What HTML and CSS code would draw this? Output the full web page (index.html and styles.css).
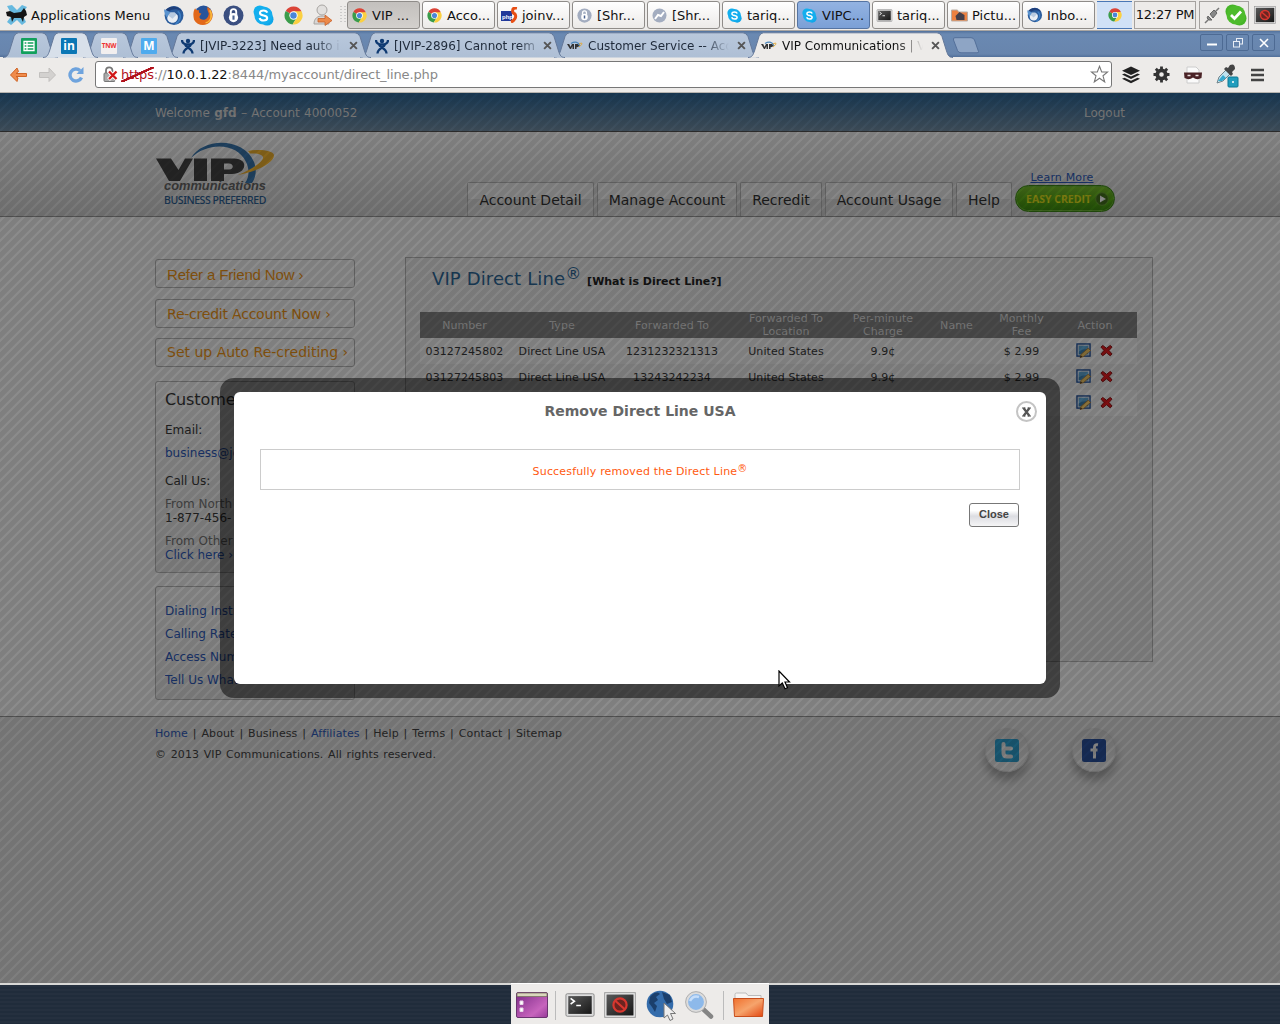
FILE: index.html
```html
<!DOCTYPE html>
<html lang="en">
<head>
<meta charset="utf-8">
<title>VIP Communications | VIP Direct Line</title>
<link rel="stylesheet" href="styles.css">
</head>
<body>
<svg class="defs" width="0" height="0">
  <defs>
    <linearGradient id="gTab" x1="0" y1="0" x2="0" y2="1"><stop offset="0" stop-color="#b9c8dc"/><stop offset="1" stop-color="#aebfd5"/></linearGradient>
    <linearGradient id="gPurple" x1="0" y1="0" x2="1" y2="1"><stop offset="0" stop-color="#7b2a86"/><stop offset=".7" stop-color="#c764bd"/><stop offset="1" stop-color="#963a98"/></linearGradient>
    <linearGradient id="gOrange" x1="0" y1="0" x2="1" y2="1"><stop offset="0" stop-color="#f0702d"/><stop offset=".5" stop-color="#f6a46c"/><stop offset="1" stop-color="#e2450f"/></linearGradient>
    <linearGradient id="gDark" x1="0" y1="0" x2="1" y2="1"><stop offset="0" stop-color="#5a5a5a"/><stop offset="1" stop-color="#161616"/></linearGradient>
  </defs>
  <symbol id="chrome" viewBox="0 0 20 20">
    <path d="M10 10 1.8 5.3A9.4 9.4 0 0 1 18.4 5.6Z" fill="#db4437"/><path d="M10 10 1.8 5.3A9.4 9.4 0 0 0 9 19.4L13.5 12Z" fill="#3b9c4a"/><path d="M10 10V5.6H18.4A9.4 9.4 0 0 1 9 19.4L13.7 12Z" fill="#fbd041"/>
    <circle cx="10" cy="10" r="4.4" fill="#fff"/><circle cx="10" cy="10" r="3.4" fill="#4a86d8"/>
  </symbol>
  <symbol id="skype" viewBox="0 0 20 20">
    <rect x="0.5" y="0.5" width="12" height="12" rx="6" fill="#10b0ee"/><rect x="7.500" y="7.500" width="12" height="12" rx="6" fill="#10a6e8"/><circle cx="10" cy="10" r="8.600" fill="#14aeee"/>
    <path d="M13.600 7.300C13 5.600 11.600 5.200 10 5.200 8 5.200 6.600 6 6.600 7.500 6.600 11 13.500 9 13.500 12.400 13.500 14 12 14.800 10 14.800 8 14.800 6.700 14 6.300 12.300" fill="none" stroke="#fff" stroke-width="2"/>
  </symbol>
  <symbol id="bird" viewBox="0 0 20 20">
    <circle cx="10.500" cy="10" r="9" fill="#2b5c9c"/><path d="M2 5C6 0 15 0 18 6 13 3 8 4 6 6Z" fill="#1e3f7b"/><path d="M4 12C4 7 12 6 14 10 15 14 12 17 9 17 6 17 4 15 4 12Z" fill="#e9eef4"/><path d="M1 4 7 7 4 12C2 10 1 7 1 4Z" fill="#5a93cf"/><path d="M5 10 9 13 13 9 11 7H7Z" fill="#b9cbe0"/><path d="M14 6C18 9 17 15 12 18" stroke="#3d7fc4" stroke-width="1.500" fill="none"/>
  </symbol>
  <symbol id="lock" viewBox="0 0 20 20">
    <circle cx="10" cy="10" r="9.500"/><path d="M7.400 9V6.500a2.600 2.600 0 0 1 5.200 0V9" fill="none" stroke="#fff" stroke-width="1.800"/><circle cx="10" cy="12" r="4.400" fill="#fff"/><path d="M10 10v4" stroke="#4b6390" stroke-width="2"/>
  </symbol>
  <symbol id="term" viewBox="0 0 32 26">
    <rect x="1" y="1" width="30" height="24" rx="1.500" fill="#ddd" stroke="#888"/><rect x="3.500" y="3.500" width="25" height="19" fill="url(#gDark)"/><path d="M6 6l4 3-4 3M12 13.500h5" fill="none" stroke="#fff" stroke-width="1.700"/>
  </symbol>
  <symbol id="block" viewBox="0 0 32 26">
    <rect x=".7" y=".7" width="30.600" height="24.600" fill="#eee" stroke="#999"/><rect x="2.500" y="2.500" width="27" height="21" fill="url(#gDark)"/><circle cx="16" cy="13" r="6.600" fill="#6b2420" stroke="#d8372f" stroke-width="2.200"/><path d="M11.500 9 20.500 17" stroke="#d8372f" stroke-width="2.200"/>
  </symbol>
  <symbol id="jira" viewBox="0 0 14 16">
    <circle cx="7" cy="3" r="2.200"/><path d="M1 2C1 6 4 6.500 7 6.500S13 6 13 2M2.500 15.500C2.500 10 9 10 10 6.500M11.500 15.500C11.500 10 5 10 4 6.500" fill="none" stroke="#0f3a72" stroke-width="2.300"/>
  </symbol>
  <symbol id="vipmini" viewBox="0 0 16 10">
    <path d="M0 3h2.200L3.500 6 5 3H7V8H5.500V5L4 8H3ZM8 3h2.600c2 0 2 3.200-.6 3.200H9.500V8H8Z" fill="#333"/><path d="M4 2.500C8 0 12 1 13 5" fill="none" stroke="#4c86ba" stroke-width="1.300"/><path d="M12 3C16 1 16 3 12 6" fill="none" stroke="#e5a935"/>
  </symbol>
  <symbol id="x" viewBox="0 0 8 8"><path d="M1 1 7 7M7 1 1 7" stroke="#555" stroke-width="1.700" fill="none"/></symbol>
  <symbol id="tab" viewBox="0 0 205 26"><path d="M0 25.500C4 25.500 5 23 6.500 19L11 4.500Q12.300 1 15.500.8H189Q192.500 1 194 4.500L198.500 19C200 23.500 201 25.500 205 25.500" stroke="#65799a"/></symbol>
  <symbol id="pin" viewBox="0 0 55 26"><path d="M0 25.500C4 25.500 5 23 6.500 19L11 4.500Q12.300 1 15.500.8H39Q42.500 1 44 4.500L48.500 19C50 23.500 51 25.500 55 25.500" stroke="#65799a"/></symbol>
  <symbol id="edit" viewBox="0 0 16 16">
    <rect x="1" y="1" width="14" height="13" fill="#dde8f5" stroke="#1d4f9c" stroke-width="1.400"/><rect x="3" y="3" width="10" height="9" fill="#62aedd"/><path d="M3 9Q7 6 13 7V12H3Z" fill="#3f86b8"/><path d="M4.500 15.500 5.500 12 13 5.500 15.500 8 8 14.500Z" fill="#fbd06a" stroke="#b07a2c" stroke-width=".8"/><path d="M4 15.800 5.200 13.200 6.600 14.700Z" fill="#432"/>
  </symbol>
  <symbol id="del" viewBox="0 0 14 14"><path d="M3 1.500 7 4.600 11 1.500 13 3.300 9.700 7 13 10.800 11 12.700 7 9.500 3 12.700 1 10.800 4.300 7 1 3.300Z" fill="#e81c20" stroke="#8d1010"/></symbol>
</svg>

<header class="panel">
  <div class="appmenu">
    <svg width="22" height="22" viewBox="0 0 22 22"><path d="M1 2 6 1 11 6 16 1 21 3 16 10 20 18 16 21 11 16 5 21 1 18 6 11Z" fill="#67b9df"/><path d="M0 8 4 7 8 9 15 8 18 4 20 7 21 11 18 13 17 18 15 14 8 14 6 18 5 13 1 12Z" fill="#141414"/></svg>
    <span>Applications Menu</span>
  </div>
  <div class="launchers">
    <svg width="21" height="21"><use href="#bird"/></svg>
    <svg width="21" height="21" viewBox="0 0 20 20"><circle cx="10" cy="9" r="8.500" fill="#27549b"/><path d="M2 3C3 5 4 5 6 5 5 7 6 8 8 8 7 10 5 11 7 13 11 16 15 12 15 8 14 5 13 4 14 2 19 5 20 11 17 15 13 21 4 20 1 14 0 10 0 6 2 3Z" fill="#e2681a"/><path d="M16 5C19 10 17 16 12 17" fill="none" stroke="#f9b83a" stroke-width="1.500"/></svg>
    <svg width="21" height="21" fill="#3b4f80"><use href="#lock"/></svg>
    <svg width="21" height="21"><use href="#skype"/></svg>
    <svg width="19" height="19"><use href="#chrome"/></svg>
    <svg width="20" height="22" viewBox="0 0 20 22"><circle cx="9" cy="6" r="5" fill="#e2e0de" stroke="#a8a5a2"/><path d="M1 20C1 14 5 12 9 12S15 14 16 20Z" fill="#d8d6d4" stroke="#a8a5a2"/><path d="M5 14.500h7V11l7 5.500-7 5V18H5Z" fill="#ec8a4a" stroke="#c8602a" stroke-width=".8"/></svg>
  </div>
  <svg class="grip" width="6" height="18"><path d="M1 0V18M5 0V18" stroke="#aaa" stroke-width="1" stroke-dasharray="1 2"/></svg>
  <nav class="tasks">
    <div class="task pressed"><svg width="15" height="15"><use href="#chrome"/></svg>VIP ...</div>
    <div class="task"><svg width="15" height="15"><use href="#chrome"/></svg>Acco...</div>
    <div class="task"><svg width="17" height="16" viewBox="0 0 17 16"><rect x="0" y="4" width="11" height="10" fill="#223a9a"/><text x="1" y="12" class="php">php</text><path d="M16 1C10 0 11 6 14 7 16 10 13 14 10 15" fill="none" stroke="#e84f14" stroke-width="3"/></svg>joinv...</div>
    <div class="task"><svg width="15" height="15" fill="#a3adc0"><use href="#lock"/></svg>[Shr...</div>
    <div class="task"><svg width="15" height="15" viewBox="0 0 15 15"><circle cx="7.500" cy="7.500" r="7" fill="#a3adc0"/><path d="M3 11 6 7l3 1 3-4" stroke="#fff" stroke-width="2" fill="none"/></svg>[Shr...</div>
    <div class="task"><svg width="15" height="15"><use href="#skype"/></svg>tariq...</div>
    <div class="task urgent"><svg width="15" height="15"><use href="#skype"/></svg>VIPC...</div>
    <div class="task"><svg width="15" height="13"><use href="#term"/></svg>tariq...</div>
    <div class="task"><svg width="16" height="14" viewBox="0 0 16 14"><path d="M0 2h6l1 2h9v9H0Z" fill="#ed8141" stroke="#b9aca3"/><path d="M4 8 8 4 13 7v5H5Z" fill="#443f4a"/></svg>Pictu...</div>
    <div class="task"><svg width="16" height="16"><use href="#bird"/></svg>Inbo...</div>
  </nav>
  <div class="active-win"><svg width="14" height="14"><use href="#chrome"/></svg></div>
  <div class="clock">12:27 PM</div>
  <div class="tray">
    <svg width="16" height="17" viewBox="0 0 16 17"><path d="M1 16 5 12M11 5 15 1" stroke="#777" stroke-width="1.500"/><path d="M4 9 8 13 5 13 3 11ZM6 7 10 3 13 6 9 11Z" fill="#888" stroke="#666"/></svg>
    <svg width="22" height="22" viewBox="0 0 22 22"><circle cx="7.500" cy="7.500" r="7" fill="#46b428"/><circle cx="14.500" cy="14.500" r="7" fill="#46b428"/><circle cx="11" cy="11" r="9.500" fill="#4dbb2c"/><path d="M6 11 9.500 14.500 16 7.500" fill="none" stroke="#fff" stroke-width="2.800"/></svg>
  </div>
  <svg class="screen" width="22" height="18"><use href="#block"/></svg>
</header>

<div class="tabstrip">
  <div class="tab pin p1"><svg class="shape" width="55" height="26" fill="url(#gTab)"><use href="#pin"/></svg>
    <svg width="16" height="16" viewBox="0 0 16 16"><rect width="16" height="16" rx="1" fill="#12a05c"/><path d="M3 3.500H13V12.500H3ZM3 6.500H13M3 9.500H13M6 3.500V12.500" fill="none" stroke="#fff" stroke-width="1.300"/></svg></div>
  <div class="tab pin p2"><svg class="shape" width="55" height="26" fill="#d8e0ea"><use href="#pin"/></svg><span class="fav linkedin">in</span></div>
  <div class="tab pin p3"><svg class="shape" width="55" height="26" fill="url(#gTab)"><use href="#pin"/></svg><span class="fav tnw">TNW</span></div>
  <div class="tab pin p4"><svg class="shape" width="55" height="26" fill="url(#gTab)"><use href="#pin"/></svg><span class="fav m">M</span></div>
  <div class="tab t1"><svg class="shape" width="205" height="26" fill="url(#gTab)"><use href="#tab"/></svg><svg width="14" height="16" fill="#0f3a72"><use href="#jira"/></svg><span class="label">[JVIP-3223] Need auto i</span><svg width="9" height="9"><use href="#x"/></svg></div>
  <div class="tab t2"><svg class="shape" width="205" height="26" fill="url(#gTab)"><use href="#tab"/></svg><svg width="14" height="16" fill="#0f3a72"><use href="#jira"/></svg><span class="label late">[JVIP-2896] Cannot rem</span><svg width="9" height="9"><use href="#x"/></svg></div>
  <div class="tab t3"><svg class="shape" width="205" height="26" fill="url(#gTab)"><use href="#tab"/></svg><svg width="16" height="10"><use href="#vipmini"/></svg><span class="label">Customer Service -- Acc</span><svg width="9" height="9"><use href="#x"/></svg></div>
  <div class="tab t4"><svg class="shape" width="205" height="26" fill="#edebe9"><use href="#tab"/></svg><svg width="16" height="10"><use href="#vipmini"/></svg><span class="label">VIP Communications | V</span><svg width="9" height="9"><use href="#x"/></svg></div>
  <svg class="newtab" width="28" height="17" viewBox="0 0 28 17"><path d="M3 .7H19Q21.500.7 22.500 3L26.500 14.500Q27 15.800 25 15.800H9Q6.500 15.800 5.500 13.500L1.500 3Q.8.700 3 .7Z" fill="#8ea5c5" stroke="#54709a"/></svg>
  <div class="winbtns">
    <span><svg width="12" height="10"><path d="M1 6.500H11" stroke="#fff" stroke-width="2"/></svg></span>
    <span><svg width="12" height="10" fill="none" stroke="#e8edf5"><rect x="4.500" y=".5" width="6" height="5.500"/><rect x="1.500" y="3.500" width="6" height="5.500" fill="#6785ad"/></svg></span>
    <span><svg width="12" height="10"><path d="M2 1 10 9M10 1 2 9" stroke="#fff" stroke-width="1.600"/></svg></span>
  </div>
</div>

<div class="toolbar">
  <svg width="19" height="16" viewBox="0 0 19 16"><path d="M8 1 1.500 8 8 14.500 9 11 7 9.500H17.500V6.500H7L9.500 4.500Z" fill="#f08c4c" stroke="#cf6426"/></svg>
  <svg width="19" height="16" viewBox="0 0 19 16"><path d="M11 1 17.500 8 11 14.500V10.500H1.500V5.500H11Z" fill="#d3d1cf" stroke="#c2c0be"/></svg>
  <svg width="17" height="18" viewBox="0 0 17 18"><path d="M13.500 11.500A6 6 0 1 1 12 4.500" fill="none" stroke="#6ea3dd" stroke-width="3.400"/><path d="M15.500 1V8H8.500Z" fill="#6ea3dd"/></svg>
  <div class="omnibox">
    <svg width="16" height="17" viewBox="0 0 16 17"><path d="M3 7V4.500a3.200 3.200 0 0 1 6.400 0V7" fill="none" stroke="#777" stroke-width="1.800"/><rect x="1" y="7" width="11" height="8.500" rx="1" fill="#aaa" stroke="#777"/><path d="M5.500 5 14 13.500M14 5 5.500 13.500" stroke="#fff" stroke-width="4"/><path d="M6 5.500 13.500 13M13.500 5.500 6 13" stroke="#d01818" stroke-width="2.300"/></svg>
    <span class="url"><span class="scheme">https</span>://<b>10.0.1.22</b>:8444/myaccount/direct_line.php</span>
    <svg class="star" width="19" height="19" viewBox="0 0 19 19"><path d="M9.500 1.300 11.700 7H17.600L13 10.800 14.700 17 9.500 13.300 4.300 17 6 10.800 1.400 7H7.300Z" fill="#fff" stroke="#777" stroke-width="1.100"/></svg>
  </div>
  <svg class="i1" width="18" height="18" viewBox="0 0 18 18"><path d="M9 .5 18 4.700 9 9 0 4.700ZM0 8.500 2.500 7.500 9 10.500 15.500 7.500 18 8.500 9 13ZM0 12.700 2.500 11.700 9 14.700 15.500 11.700 18 12.700 9 17.300Z" fill="#222"/></svg>
  <svg class="i2" width="17" height="17" viewBox="0 0 17 17"><circle cx="8.500" cy="8.500" r="4.200" fill="none" stroke="#333" stroke-width="3.800"/><path d="M8.500.5V4M8.500 13V16.500M.5 8.500H4M13 8.500H16.500M2.800 2.800 5 5M12 12 14.200 14.200M14.200 2.800 12 5M5 12 2.800 14.200" stroke="#333" stroke-width="2.800"/></svg>
  <svg class="i3" width="18" height="18" viewBox="0 0 18 18"><path d="M3 1H12L15 4V17H3Z" fill="#fafafa" stroke="#ccc"/><path d="M0 6.500H18L17.500 12Q13 14.500 9 11.500 5 14.500.5 12Z" fill="#4a2226"/><path d="M3.500 9.500h3M11.500 9.500h3" stroke="#e9dede" stroke-width="1.600"/></svg>
  <svg class="i4" width="24" height="24" viewBox="0 0 24 24"><path d="M2 19 4 13 11 6 15 10 8 17Z" fill="#bfe2ef" stroke="#71858c"/><path d="M3 17 8 11 11 14 7 17Z" fill="#36a9d0"/><path d="M9 5 11 3 13 4 15 1Q20-1 20 5L17 8 18 10 16 12Z" fill="#454545"/><rect x="13" y="13" width="10" height="10" rx="1" fill="#209dbd" stroke="#0d7894"/><circle cx="18" cy="18" r="1" fill="#fff"/></svg>
  <svg class="i5" width="13" height="14"><path d="M0 2H13M0 7H13M0 12H13" stroke="#444" stroke-width="2.600"/></svg>
</div>

<main class="page">
  <div class="topbar"><div class="wrap"><span>Welcome <b>gfd</b> – Account 4000052</span><span class="logout">Logout</span></div></div>
  <div class="head"><div class="wrap">
    <div class="logo">
      <svg width="120" height="52" viewBox="0 0 120 52">
        <path d="M36 16C48-5 89-5 99 20 102 28 101 35 97 41L90 41C95 34 94 26 91 20 82 0 52 0 36 16Z" fill="#3a78b0"/>
        <path d="M93 9C103 7 118 8 119 13 119 21 103 29 83 33 98 27 109 19 108 15 107 12 101 11 95 11.500Z" fill="#f8b830"/>
        <path d="M1 16.500H16L23.500 28 30 16.500H38L25 39H14ZM39 16.500H52V39H39ZM56 16.500H79C94 16.500 92 32 77 32H69V39H56ZM69 21.500V27.500H74C79 27.500 79 21.500 74 21.500Z" fill="#444" fill-rule="evenodd"/>
        <text x="9" y="48" class="comm" textLength="102" lengthAdjust="spacingAndGlyphs">communications</text>
      </svg>
      <span class="pref">BUSINESS PREFERRED</span>
    </div>
    <nav class="nav"><a class="n1">Account Detail</a><a class="n2">Manage Account</a><a class="n3">Recredit</a><a class="n4">Account Usage</a><a class="n5">Help</a></nav>
    <div class="easy"><a class="learn">Learn More</a><a class="pill"><span>EASY CREDIT</span><svg width="14" height="14" viewBox="0 0 14 14"><circle cx="7" cy="7" r="6.300" fill="#46751e" stroke="#6fa83a"/><path d="M5 3.500 11 7 5 10.500Z" fill="#fff"/></svg></a></div>
  </div></div>

  <div class="body">
    <aside class="side">
      <a class="cta c1">Refer a Friend Now <i>›</i></a>
      <a class="cta">Re-credit Account Now <i>›</i></a>
      <a class="cta c3">Set up Auto Re-crediting <i>›</i></a>
      <section class="box contact">
        <h2>Customer Service</h2>
        <p class="email">Email:</p>
        <p class="mail"><a>business@joinvip.com</a></p>
        <p class="call">Call Us:</p>
        <p class="from"><span>From North America:</span><br>1-877-456-</p>
        <p class="from"><span>From Other Places:</span><br><a>Click here ›</a></p>
      </section>
      <section class="box links"><a>Dialing Instructions</a><a>Calling Rates</a><a>Access Numbers</a><a>Tell Us What You Think</a></section>
    </aside>
    <section class="content">
      <h1>VIP Direct Line<sup>®</sup> <small>[What is Direct Line?]</small></h1>
      <table>
        <colgroup><col class="w1"><col class="w2"><col class="w3"><col class="w3"><col class="w5"><col class="w6"><col class="w7"><col class="w8"></colgroup>
        <thead><tr><th>Number</th><th>Type</th><th>Forwarded To</th><th>Forwarded To<br>Location</th><th>Per-minute<br>Charge</th><th>Name</th><th>Monthly<br>Fee</th><th>Action</th></tr></thead>
        <tbody>
          <tr><td>03127245802</td><td>Direct Line USA</td><td>1231232321313</td><td>United States</td><td>9.9¢</td><td></td><td>$ 2.99</td><td><div class="acts"><svg width="15" height="15"><use href="#edit"/></svg><svg width="13" height="13"><use href="#del"/></svg></div></td></tr>
          <tr><td>03127245803</td><td>Direct Line USA</td><td>13243242234</td><td>United States</td><td>9.9¢</td><td></td><td>$ 2.99</td><td><div class="acts"><svg width="15" height="15"><use href="#edit"/></svg><svg width="13" height="13"><use href="#del"/></svg></div></td></tr>
          <tr><td></td><td></td><td></td><td></td><td></td><td></td><td></td><td><div class="acts"><svg width="15" height="15"><use href="#edit"/></svg><svg width="13" height="13"><use href="#del"/></svg></div></td></tr>
        </tbody>
      </table>
    </section>
  </div>

  <footer class="foot"><div class="wrap">
    <div class="legal"><p class="sitelinks"><a>Home</a> | About | Business | <a>Affiliates</a> | Help | Terms | Contact | Sitemap</p><p>© 2013 VIP Communications. All rights reserved.</p></div>
    <div class="social">
      <span class="disc"><svg width="24" height="23" viewBox="0 0 24 23"><rect width="24" height="23" rx="2.500" fill="#2fa3d3"/><path d="M8.500 5V14Q8.500 17.500 12 17.500H16M8.500 9.500H16" fill="none" stroke="#eee" stroke-width="4" stroke-linecap="round"/></svg></span>
      <span class="disc"><svg width="24" height="23" viewBox="0 0 24 23"><rect width="24" height="23" rx="2.500" fill="#2a52a0"/><path d="M16 5.800C13 5.300 12.500 6.500 12.500 9V19.500M8.500 11H15.500" fill="none" stroke="#eee" stroke-width="3"/></svg></span>
    </div>
  </div></footer>

  <div class="overlay"></div>
  <div class="frame"><div class="dialog">
    <div class="dhead"><h3>Remove Direct Line USA</h3><span class="dx"><svg width="9" height="10" viewBox="0 0 9 10"><path d="M1.500 1 7.500 9M7.500 1 1.500 9" stroke="#555" stroke-width="2.200"/><path d="M0 1H3.500M5.500 1H9M0 9H3.500M5.500 9H9" stroke="#555"/></svg></span></div>
    <div class="msg"><p>Succesfully removed the Direct Line<sup>®</sup></p></div>
    <button class="close">Close</button>
  </div></div>
  <svg class="cursor" width="13" height="20" viewBox="0 0 13 20"><path d="M1 1V16L4.300 13 7 18.800 9.500 17.700 7 12H11.500Z" fill="#fff" stroke="#000" stroke-width="1.200"/></svg>
</main>

<div class="desk"><div class="dock">
  <svg width="32" height="26" viewBox="0 0 32 26"><rect x=".5" y=".5" width="31" height="25" rx="1.500" fill="url(#gPurple)" stroke="#6a3470"/><path d="M1 1H31V4.500H1Z" fill="#dad6bd" stroke="#77745f" stroke-width=".8"/><path d="M4 9h3v3.500H4ZM4 16h3v3.500H4Z" fill="#fff" stroke="#e6d5e6"/></svg>
  <i class="sep"></i>
  <svg class="d1" width="30" height="26"><use href="#term"/></svg>
  <svg class="d2" width="32" height="26"><use href="#block"/></svg>
  <svg class="d3" width="30" height="31" viewBox="0 0 30 31"><circle cx="14" cy="14" r="13.300" fill="#346cab"/><path d="M4 7C8 1 13 2 14 4L10 7 12 10 8 13 11 16 9 22 6 17 3 13ZM16 2 24 5 26 12 21 14 18 9Z" fill="#1b3f6c"/><path d="M18 13V28L21.500 25 24 30.500 27 29 24.500 23.500H29.500Z" fill="#eee" stroke="#777"/></svg>
  <svg class="d4" width="30" height="29" viewBox="0 0 30 29"><path d="M18 18 26 25.500" stroke="#858585" stroke-width="4.500" stroke-linecap="round"/><circle cx="11" cy="11" r="9.200" fill="#8db9ea" stroke="#dcdcdc" stroke-width="2.500"/><circle cx="11" cy="11" r="10.400" fill="none" stroke="#999" stroke-width=".7"/><path d="M5 10Q8 4 14 6" stroke="#c6defa" stroke-width="2.500" fill="none"/></svg>
  <i class="sep s2"></i>
  <svg class="d5" width="31" height="26" viewBox="0 0 31 26"><path d="M2 8V2.500Q2 1 3.500 1H13L15 3.500H28V8" fill="#f7f4f2" stroke="#bbb"/><path d="M.5 6.500H30.500L29.500 24.500H1.500Z" fill="url(#gOrange)" stroke="#c84d1b"/></svg>
</div></div>
</body>
</html>
```
FILE: styles.css
```css
* { box-sizing: border-box; }
body { margin: 0; width: 1280px; height: 1024px; overflow: hidden; display: flex; flex-direction: column; font-family: "DejaVu Sans", sans-serif; background: #25303f; }
svg { display: block; flex: none; }
h1, h2, h3, p { margin: 0; font-weight: normal; }
.defs { position: absolute; }

/* Desktop panel */
.panel { height: 31px; flex: none; display: flex; align-items: center; background: #edebe9; border-bottom: 1px solid #aaa6a2; font-size: 13px; color: #111; white-space: nowrap; }
.appmenu { display: flex; align-items: center; gap: 3px; width: 155px; padding-left: 6px; }
.launchers { display: flex; align-items: center; gap: 9px; width: 185px; padding-left: 8px; }
.launchers svg:nth-child(5) { margin: 0 1px; }
.grip { margin-right: 1px; }
.tasks { display: flex; gap: 2px; }
.task { width: 73px; height: 28px; display: flex; align-items: center; gap: 4px; padding-left: 3px; border: 1px solid #8f8c89; border-radius: 3px; background: linear-gradient(#fff, #eceae8); overflow: hidden; }
.task svg { width: 17px; }
.pressed { background: linear-gradient(#c3c0bd, #d3d0cd); }
.urgent { background: linear-gradient(#93b3e2, #7ba0d6); border-color: #5574a2; }
.php { font: bold 6px "Liberation Sans", sans-serif; fill: #fff; }
.active-win { width: 35px; height: 28px; margin-left: 2px; display: flex; align-items: center; justify-content: center; background: #d0e1f7; border: solid #4a77b5; border-width: 1px 0; }
.clock { width: 62px; height: 28px; margin-left: 2px; line-height: 26px; border: 1px solid #a5a29f; text-align: center; letter-spacing: -.3px; }
.tray { width: 50px; height: 28px; margin-left: 3px; padding: 0 1px 0 4px; display: flex; align-items: center; justify-content: space-between; border: 1px solid #a5a29f; }
.screen { margin-left: 5px; }

/* Browser tabs */
.tabstrip { height: 26px; flex: none; display: flex; align-items: flex-start; padding: 0 5px 0 3px; background: linear-gradient(#52729d, #6a89b2 3px, #6885ad 23px, #52709a); font-size: 12px; color: #1f2a3a; }
.tab { position: relative; width: 205px; height: 26px; padding: 3px 16px 0 21px; margin-right: -11px; display: flex; align-items: center; }
.tab > :not(.shape) { position: relative; }
.tab .shape { position: absolute; left: 0; top: 1px; }
.pin { width: 55px; padding: 3px 0 0 18px; margin-right: -15px; }
.p1 { z-index: 8; } .p2 { z-index: 9; } .p3 { z-index: 7; } .p4 { z-index: 6; margin-right: -12px; }
.t1 { z-index: 5; } .t2 { z-index: 4; } .t3 { z-index: 3; } .t4 { z-index: 10; color: #111; margin-right: 0; }
.t1, .t2 { padding-left: 15px; }
.t3, .t4 { padding-left: 13px; }
.label { width: 141px; margin: 0 8px 0 5px; overflow: hidden; white-space: nowrap; flex: none; line-height: 16px; -webkit-mask-image: linear-gradient(90deg, #000 115px, transparent 141px); mask-image: linear-gradient(90deg, #000 115px, transparent 141px); }
.late { -webkit-mask-image: linear-gradient(90deg, #000 125px, transparent 148px); mask-image: linear-gradient(90deg, #000 125px, transparent 148px); }
.fav { width: 16px; height: 16px; border-radius: 1px; color: #fff; text-align: center; font: bold 12px/16px "Open Sans", sans-serif; }
.linkedin { background: #0b77b5; }
.tnw { background: #f2efef; color: #e33; font-size: 6.5px; letter-spacing: -.2px; }
.m { background: #4fabee; }
.newtab { margin: 6px 0 0 -1px; }
.winbtns { margin: 3px 0 0 auto; display: flex; gap: 3px; }
.winbtns span { width: 23px; height: 17px; border: 1px solid #4d6a93; border-radius: 2px; display: flex; align-items: center; justify-content: center; }

/* Toolbar */
.toolbar { height: 36px; flex: none; display: flex; align-items: center; padding: 0 0 0 9px; background: #edebe9; border-bottom: 1px solid #b7b4b0; }
.toolbar > svg:nth-child(2) { margin: 0 11px 0 10px; }
.omnibox { width: 1017px; height: 27px; margin-left: 10px; padding: 0 2px 0 7px; display: flex; align-items: center; background: #fff; border: 1px solid #777; border-radius: 3px; }
.url { margin-left: 2px; font-size: 13px; color: #888; letter-spacing: -.13px; }
.url b { font-weight: normal; color: #111; }
.scheme { display: inline-block; color: #b1121b; background: linear-gradient(to top left, transparent 45%, #b1121b 46%, #b1121b 54%, transparent 55%); }
.star { margin-left: auto; }
.i1 { margin-left: 10px; } .i2 { margin-left: 13px; } .i3 { margin-left: 14px; } .i4 { margin: 3px 0 0 13px; } .i5 { margin-left: 12px; }

/* Site */
.page { position: relative; height: 890px; flex: none; overflow: hidden; background: #fff; font-family: "DejaVu Sans", Verdana, sans-serif; font-size: 12px; color: #3a3a3a; display: flex; flex-direction: column; }
.wrap { width: 998px; margin-left: 155px; display: flex; }
.page a { color: #2f5dc0; }
.topbar { height: 39px; flex: none; background: linear-gradient(#2f6a9c, #7894ab); border-bottom: 1px solid #555; color: #dcdcdc; line-height: 40px; word-spacing: .5px; }
.logout { margin: 0 28px 0 auto; }
.head { height: 85px; flex: none; background: linear-gradient(#fff, #d8d8d8); border-bottom: 1px solid #999; }
.head .wrap { height: 84px; }
.logo { width: 312px; padding-top: 10px; }
.comm { font: italic bold 13px "Liberation Sans", sans-serif; fill: #666; }
.pref { display: block; margin: -1px 0 0 9px; font: 500 10.5px/14px "Noto Sans", sans-serif; letter-spacing: -.42px; color: #2d6297; white-space: nowrap; }
.nav { display: flex; gap: 3px; align-items: flex-end; }
.page .nav a { height: 34px; line-height: 35px; border: 1px solid #bbb; border-bottom: 0; border-radius: 2px 2px 0 0; background: linear-gradient(#f6f6f6 48%, #e2e2e2 49%, #e4e4e4); color: #333; font-size: 14px; text-align: center; white-space: nowrap; }
.n1 { width: 127px; } .n2 { width: 140px; } .n3 { width: 82px; } .n4 { width: 128px; } .n5 { width: 56px; }
.easy { width: 100px; margin-left: 3px; padding-top: 39px; }
.learn { display: block; font-size: 11px; line-height: 14px; text-align: center; text-decoration: underline; padding-right: 6px; letter-spacing: .15px; }
.pill { display: flex; align-items: center; justify-content: space-between; height: 27px; padding: 0 5px 0 10px; border-radius: 14px; border: 1px solid #3f8b16; background: linear-gradient(#7fc62f, #55a814 60%, #3d8f0f); box-shadow: inset 0 0 0 1px #6fba38; }
.pill span { font: bold 10.5px "Open Sans", sans-serif; color: #e6e51e; white-space: nowrap; }
.body { height: 499px; flex: none; display: flex; gap: 50px; padding: 42px 0 0 155px; align-items: flex-start; }
.side { width: 200px; display: flex; flex-direction: column; }
.page .cta { height: 29px; margin-bottom: 10px; padding-left: 11px; border: 1px solid #bbb; border-radius: 3px; color: #f79a17; font-size: 14px; line-height: 29px; letter-spacing: -.22px; white-space: nowrap; }
.cta i { font-style: normal; }
.side .c1 { margin-bottom: 11px; font-family: "Liberation Sans", sans-serif; font-size: 15px; letter-spacing: -.15px; }
.side .c3 { margin-bottom: 14px; line-height: 27px; letter-spacing: 0; }
.box { border: 1px solid #bbb; border-radius: 3px; background: linear-gradient(#fff, #ececec); padding-left: 9px; white-space: nowrap; }
.contact { height: 192px; line-height: 14px; }
.contact h2 { font-size: 16px; line-height: 20px; margin-top: 8px; letter-spacing: -.1px; }
.email { margin-top: 13px; } .mail { margin-top: 9px; } .call { margin-top: 14px; }
.from { margin: 9px 0; }
.from span { color: #777; }
.links { height: 114px; margin-top: 13px; padding-top: 13px; }
.links a { display: block; height: 23px; line-height: 23px; }
.content { width: 748px; height: 405px; margin-top: -2px; padding: 0 0 0 14px; border: 1px solid #bbb; background: linear-gradient(#f4f4f4, #eee); }
.content h1 { height: 54px; padding: 10px 0 0 12px; font-size: 18px; line-height: 22px; color: #2d6a9c; white-space: nowrap; letter-spacing: .12px; }
.content sup { font-size: 16px; line-height: 0; vertical-align: 6px; }
.content small { font-size: 11px; font-weight: bold; color: #222; letter-spacing: 0; }
table { width: 717px; table-layout: fixed; border-collapse: collapse; font-size: 11px; text-align: center; letter-spacing: .08px; }
th, td { padding: 0; height: 26px; font-weight: normal; line-height: 13px; white-space: nowrap; }
th { background: #888; color: #ddd; }
tbody tr:nth-child(odd) { background: #fcfcfc; }
.w1 { width: 89px; } .w2 { width: 106px; } .w3 { width: 114px; } .w5 { width: 80px; } .w6 { width: 67px; } .w7 { width: 63px; } .w8 { width: 84px; }
.acts { display: flex; align-items: center; justify-content: center; gap: 9px; padding: 0 2px 2px 0; }
.foot { height: 267px; flex: none; border-top: 1px solid #999; background: #e8e8e8; font-size: 11px; color: #444; }
.legal { width: 830px; padding-top: 6px; line-height: 21px; letter-spacing: .1px; word-spacing: 1px; }
.sitelinks { word-spacing: 1.3px; }
.social { display: flex; gap: 43px; padding-top: 11px; }
.disc { width: 44px; height: 44px; border-radius: 50%; display: flex; align-items: center; justify-content: center; background: linear-gradient(#d8d8d8, #f4f4f4); border: 1px solid #d8d8d8; box-shadow: 0 8px 10px rgba(0, 0, 0, .28); }

/* Dimmed layer and dialog */
.overlay { position: absolute; inset: 0; background: repeating-linear-gradient(135deg, rgba(0, 0, 0, .5) 0, rgba(0, 0, 0, .5) 4.1px, rgba(0, 0, 0, .455) 5px, rgba(0, 0, 0, .455) 6.2px, rgba(0, 0, 0, .5) 7.071px); }
.frame { position: absolute; left: 220px; top: 285px; width: 840px; height: 320px; padding: 14px; border-radius: 14px; background: rgba(0, 0, 0, .5); }
.dialog { height: 292px; padding: 0 26px; border-radius: 6px; background: #fff; display: flex; flex-direction: column; }
.dhead { position: relative; height: 57px; padding-top: 9px; text-align: center; }
.dhead h3 { font-size: 14px; line-height: 20px; font-weight: bold; color: #666; }
.dx { position: absolute; right: -17px; top: 9px; width: 21px; height: 21px; border: 2px solid #c4c4c4; border-radius: 50%; display: flex; align-items: center; justify-content: center; }
.msg { height: 41px; border: 1px solid #ccc; text-align: center; font-size: 11px; line-height: 43px; color: #ff5a10; letter-spacing: .17px; }
.msg sup { font-size: 10px; line-height: 0; vertical-align: 3px; }
.close { align-self: flex-end; width: 50px; height: 24px; margin: 13px 1px 0 0; padding: 0 0 2px; border: 1px solid #777; border-radius: 3px; background: linear-gradient(#fff 30%, #dcdde2 55%, #f5f5f6); font: bold 11px "Liberation Sans", sans-serif; color: #444; }
.cursor { position: absolute; left: 778px; top: 577px; }

/* Desktop dock */
.desk { height: 41px; flex: none; display: flex; justify-content: center; background: repeating-linear-gradient(#25303f 0 2px, #202c3b 2px 4px); border-top: 2px solid #d8d8d6; }
.dock { width: 258px; height: 41px; margin-top: -2px; padding: 2px 0 0 5px; display: flex; align-items: center; background: #edebe9; border-top: 1px solid #fff; }
.sep { width: 1px; height: 29px; margin-left: 7px; background: #bbb; }
.d1, .d2, .d5 { margin-left: 9px; }
.d3 { margin-left: 10px; }
.d4 { margin-left: 9px; }
.s2 { margin-left: 8px; }
```
